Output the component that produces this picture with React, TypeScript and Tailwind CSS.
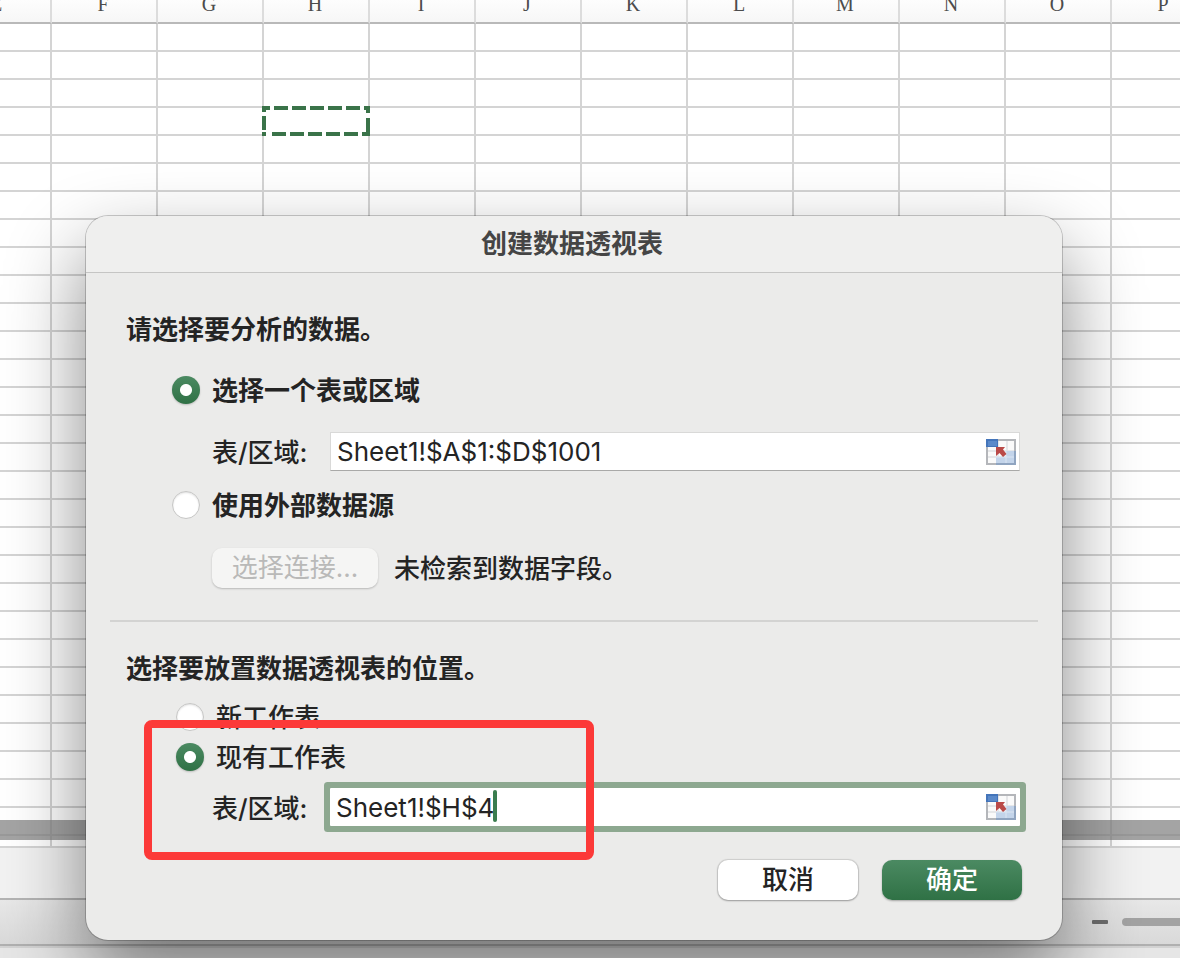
import React, { useState } from 'react';

const columns = ['E', 'F', 'G', 'H', 'I', 'J', 'K', 'L', 'M', 'N', 'O', 'P'];
const rows = Array.from({ length: 30 }, (_, i) => i + 1);

function Marquee() {
  return (
    <svg className="absolute -left-0.5 -top-0.5 z-10" width="108" height="30" viewBox="0 0 108 30" fill="none" aria-hidden="true">
      <rect x="2" y="2" width="104" height="26" stroke="#fff" strokeWidth="4" />
      <g stroke="#3a7349" strokeWidth="4">
        <path d="M0 2H8M12 2H26M30 2H44M48 2H62M66 2H80M84 2H98M102 2H108" />
        <path d="M0 28H4M10 28H24M28 28H42M46 28H60M64 28H78M82 28H96M100 28H108" />
        <path d="M2 0V6M2 10V24M106 0V7M106 12V30" />
      </g>
    </svg>
  );
}

function Spreadsheet() {
  return (
    <div className="relative overflow-hidden bg-white">
      <table className="w-[1218px] table-fixed border-separate border-spacing-0">
        <thead>
          <tr className="bg-linear-to-b from-[#fdfdfd] to-[#f6f6f6]">
            {columns.map((c, i) => (
              <th
                key={c}
                scope="col"
                className={`h-6 border-r-2 border-b-2 border-r-[#dcdcdc] border-b-[#b9b9b9] p-0 align-top font-normal ${i === 0 ? 'w-[52px]' : 'w-[106px]'}`}
              >
                <div className={`-mt-1.5 h-5 pr-0.5 font-['Liberation_Serif',serif] text-[20px] leading-5 text-[#4c4c4c] ${i === 0 ? '-ml-14' : ''}`}>{c}</div>
              </th>
            ))}
          </tr>
        </thead>
        <tbody>
          {rows.map((r) => (
            <tr key={r}>
              {columns.map((c) => (
                <td key={c} className={`relative border-r-2 border-b-2 border-[#d4d4d4] p-0 ${r === 30 ? 'h-3' : 'h-7'}`}>
                  {c === 'H' && r === 4 && <Marquee />}
                </td>
              ))}
            </tr>
          ))}
        </tbody>
      </table>
      <div className="absolute inset-x-0 bottom-2 h-5 bg-[#858585]/75" />
    </div>
  );
}

function RangeIcon() {
  return (
    <svg width="30" height="26" viewBox="0 0 30 26" aria-hidden="true">
      <rect x="1" y="1" width="28" height="24" fill="#fafafa" stroke="#b4b6ba" strokeWidth="2" />
      <path d="M12 2V24M21 2V24M2 12H28M2 18H28" stroke="#e0e1e4" strokeWidth="1.5" />
      <path d="M20 12H28V24H10V18H20Z" fill="#c3d4ea" />
      <path d="M20 12V24M10 18H28" stroke="#dbe5f2" />
      <path d="M10 25H29V12" fill="none" stroke="#8fa4c0" strokeWidth="2" />
      <rect width="12" height="8" fill="#4475ba" />
      <rect x="2" y="2" width="9" height="5" fill="#5b8aca" />
      <path d="M10 8H19L17 10.500L20.500 15L17 18L13.500 14L10 17Z" fill="#ba4a48" />
    </svg>
  );
}

type RadioProps = { name: string; label: string; checked: boolean; onChange: () => void; bold?: boolean };

function Radio({ name, label, checked, onChange, bold }: RadioProps) {
  return (
    <label className={`flex h-8 items-center gap-3 ${bold ? 'font-bold' : 'font-medium'}`}>
      <input
        type="radio"
        name={name}
        checked={checked}
        onChange={onChange}
        className="size-7 shrink-0 appearance-none rounded-full border border-[#c6c6c5] bg-white shadow-[inset_0_1px_2px_rgba(0,0,0,0.12)] outline-none checked:border-0 checked:bg-[radial-gradient(circle,#fff_5.5px,transparent_6.5px),linear-gradient(#4b8a62,#2f7145)] checked:shadow-[0_1px_2px_rgba(0,0,0,0.2)]"
      />
      <span className="pt-0.5">{label}</span>
    </label>
  );
}

type RangeFieldProps = { id: string; value: string; onChange: (v: string) => void; active?: boolean };

function RangeField({ id, value, onChange, active }: RangeFieldProps) {
  return (
    <div className="flex h-10 items-start pl-[86px]">
      <label htmlFor={id} className="w-[118px] shrink-0 pt-px leading-10 font-medium">表/区域:</label>
      <div
        className={`relative flex min-w-0 flex-1 items-center bg-white ${
          active ? 'h-[38px] rounded-[1px] pr-1 ring-6 ring-[#8da890]' : 'h-[39px] border border-[#d9d9d8] border-b-[#a9a9a8] pr-[3px]'
        }`}
      >
        <input
          id={id}
          value={value}
          onChange={(e) => onChange(e.target.value)}
          className="h-full min-w-0 flex-1 bg-transparent pl-1.5 outline-none"
        />
        {active && <span className="absolute left-[163px] top-0.5 h-8 w-1 rounded-full bg-[#3a7d4f]" />}
        <button type="button" aria-label="选择区域"><RangeIcon /></button>
      </div>
    </div>
  );
}

function PivotDialog() {
  const [source, setSource] = useState('range');
  const [target, setTarget] = useState('existing');
  const [range, setRange] = useState('Sheet1!$A$1:$D$1001');
  const [place, setPlace] = useState('Sheet1!$H$4');
  return (
    <section
      role="dialog"
      aria-labelledby="title"
      className="absolute left-[86px] right-[118px] top-[216px] z-20 rounded-[22px] bg-[#ebebea] text-[#242424] shadow-[0_0_0_1px_rgba(0,0,0,0.2),0_36px_80px_rgba(0,0,0,0.48)]"
    >
      <h1 id="title" className="flex h-[57px] items-center justify-center rounded-t-[22px] border-b border-[#c5c5c4] bg-[#efefee] pr-1 font-bold text-[#454545]">
        创建数据透视表
      </h1>
      <form onSubmit={(e) => e.preventDefault()}>
        <div className="pl-10 pr-[42px] pt-10">
          <h2 className="pt-px leading-8 font-bold">请选择要分析的数据。</h2>
          <div className="mt-7 pl-[46px]">
            <Radio name="source" label="选择一个表或区域" bold checked={source === 'range'} onChange={() => setSource('range')} />
          </div>
          <div className="mt-[26px]">
            <RangeField id="range" value={range} onChange={setRange} />
          </div>
          <div className="mt-[17px] pl-[46px]">
            <Radio name="source" label="使用外部数据源" bold checked={source === 'external'} onChange={() => setSource('external')} />
          </div>
          <div className="mt-[27px] flex items-center gap-4 pl-[86px]">
            <button type="button" disabled className="h-10 w-[166px] rounded-[10px] bg-[#f5f5f4] text-[#b9b9b8] shadow-[0_1px_2px_rgba(0,0,0,0.22)]">
              选择连接...
            </button>
            <p className="pt-0.5 font-medium">未检索到数据字段。</p>
          </div>
        </div>
        <hr className="mx-6 mt-8 border-t-2 border-[#d3d3d2]" />
        <div className="relative pl-10 pr-[42px] pt-[30px]">
          <h2 className="pt-px leading-8 font-bold">选择要放置数据透视表的位置。</h2>
          <div className="mt-4 flex flex-col gap-2 pl-[50px]">
            <Radio name="target" label="新工作表" checked={target === 'new'} onChange={() => setTarget('new')} />
            <Radio name="target" label="现有工作表" checked={target === 'existing'} onChange={() => setTarget('existing')} />
          </div>
          <div className="mt-[15px]">
            <RangeField id="place" value={place} onChange={setPlace} active />
          </div>
          <div className="pointer-events-none absolute left-[58px] top-[98px] z-10 h-[140px] w-[450px] rounded-lg border-8 border-[#fc3938]" />
        </div>
        <div className="flex justify-end gap-6 px-10 pb-10 pt-8">
          <button type="button" className="h-10 w-[140px] rounded-[10px] bg-white font-medium shadow-[0_0_1px_1px_rgba(0,0,0,0.12),0_1px_2px_rgba(0,0,0,0.25)]">取消</button>
          <button type="submit" className="h-10 w-[140px] rounded-[10px] bg-linear-to-b from-[#4b8a62] to-[#2f7145] font-medium text-white shadow-[0_1px_2px_rgba(0,0,0,0.3)]">确定</button>
        </div>
      </form>
    </section>
  );
}

export default function App() {
  return (
    <main className="relative flex min-h-screen flex-col overflow-hidden bg-[#e2e2e2] font-['Inter','Noto_Sans_CJK_SC',sans-serif] text-[26px] leading-8">
      <Spreadsheet />
      <div className="h-[52px] border-b-2 border-[#b4b4b4] bg-[#f2f2f2]" />
      <div className="flex h-[46px] items-center justify-end border-b-2 border-[#b0b0b0] bg-linear-to-b from-[#e8e8e8] to-[#d9d9d9]">
        <div className="h-1 w-4 rounded-[1px] bg-[#6d6d6d]" />
        <div className="ml-3.5 h-2 w-[58px] rounded-l-full bg-[#a3a3a3]" />
      </div>
      <div className="flex-1 border-t-2 border-[#d2d2d2] bg-[#e6e6e6]" />
      <PivotDialog />
    </main>
  );
}
